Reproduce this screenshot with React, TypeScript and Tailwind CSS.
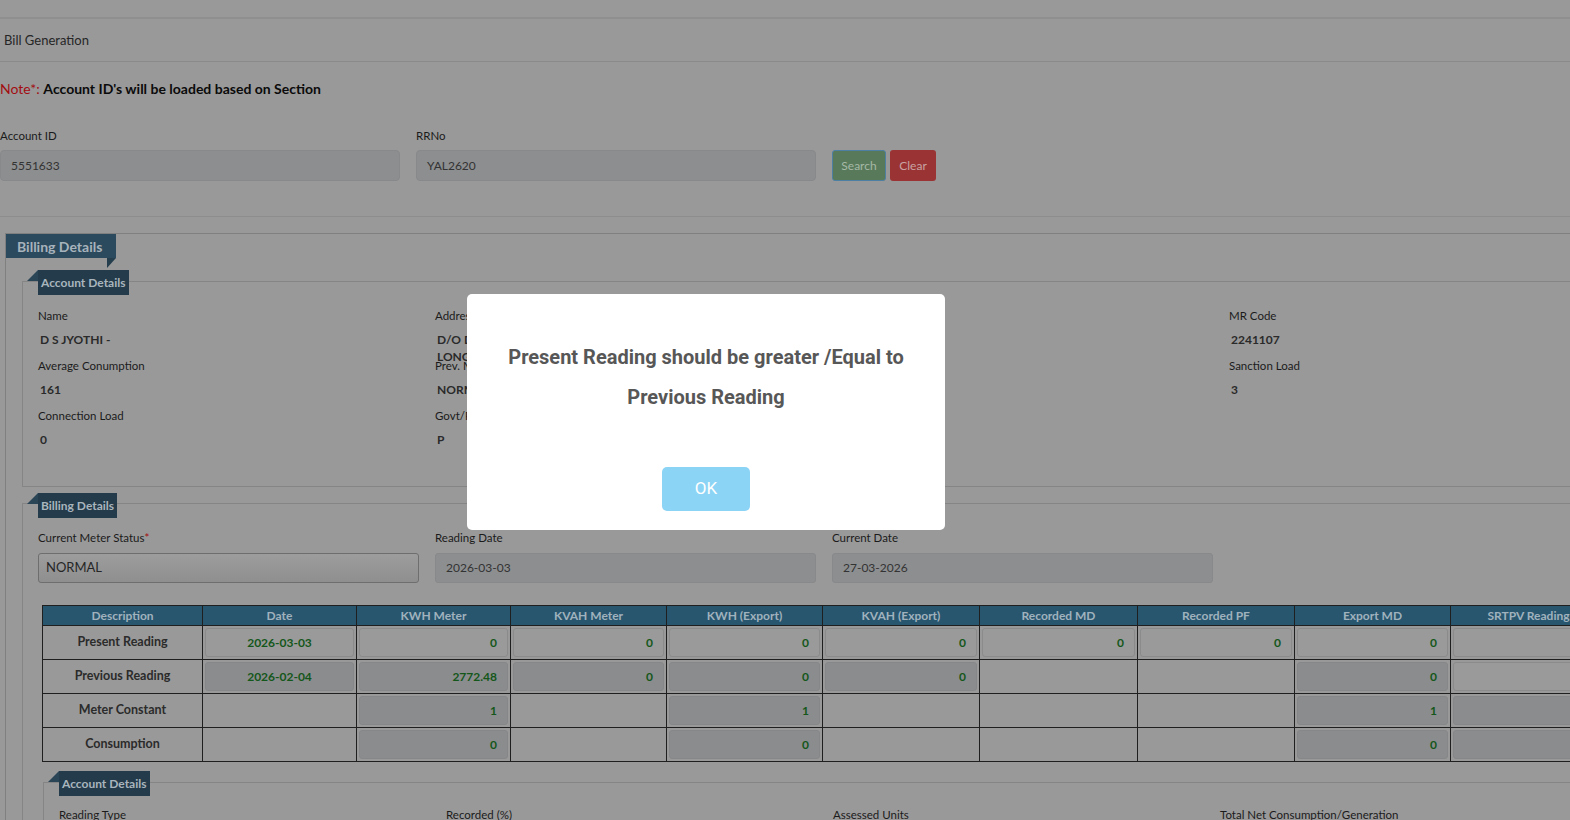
import React from 'react';

type Kind = 'w' | 'r' | 'n';
interface Cell {
  k: Kind;
  v?: string;
  center?: boolean;
}

const columns = [
  { title: 'Description', w: 160 },
  { title: 'Date', w: 154 },
  { title: 'KWH Meter', w: 154 },
  { title: 'KVAH Meter', w: 156 },
  { title: 'KWH (Export)', w: 156 },
  { title: 'KVAH (Export)', w: 157 },
  { title: 'Recorded MD', w: 158 },
  { title: 'Recorded PF', w: 157 },
  { title: 'Export MD', w: 156 },
  { title: 'SRTPV Reading', w: 156 },
];

const rows: { label: string; cells: Cell[] }[] = [
  {
    label: 'Present Reading',
    cells: [
      { k: 'w', v: '2026-03-03', center: true },
      { k: 'w', v: '0' },
      { k: 'w', v: '0' },
      { k: 'w', v: '0' },
      { k: 'w', v: '0' },
      { k: 'w', v: '0' },
      { k: 'w', v: '0' },
      { k: 'w', v: '0' },
      { k: 'w' },
    ],
  },
  {
    label: 'Previous Reading',
    cells: [
      { k: 'r', v: '2026-02-04', center: true },
      { k: 'r', v: '2772.48' },
      { k: 'r', v: '0' },
      { k: 'r', v: '0' },
      { k: 'r', v: '0' },
      { k: 'n' },
      { k: 'n' },
      { k: 'r', v: '0' },
      { k: 'w' },
    ],
  },
  {
    label: 'Meter Constant',
    cells: [
      { k: 'n' },
      { k: 'r', v: '1' },
      { k: 'n' },
      { k: 'r', v: '1' },
      { k: 'n' },
      { k: 'n' },
      { k: 'n' },
      { k: 'r', v: '1' },
      { k: 'r' },
    ],
  },
  {
    label: 'Consumption',
    cells: [
      { k: 'n' },
      { k: 'r', v: '0' },
      { k: 'n' },
      { k: 'r', v: '0' },
      { k: 'n' },
      { k: 'n' },
      { k: 'n' },
      { k: 'r', v: '0' },
      { k: 'r' },
    ],
  },
];

const accountFields: { label: string; value: React.ReactNode }[] = [
  { label: 'Name', value: 'D S JYOTHI -' },
  {
    label: 'Address',
    value: (
      <>
        D/O DODDAIAH NO 12 3RD CROSS
        <br />
        LONGFORD ROAD
      </>
    ),
  },
  { label: 'Tariff', value: 'LT-2A' },
  { label: 'MR Code', value: '2241107' },
  { label: 'Average Conumption', value: '161' },
  { label: 'Prev. Meter Status', value: 'NORMAL' },
  { label: 'Phase', value: '1' },
  { label: 'Sanction Load', value: '3' },
  { label: 'Connection Load', value: '0' },
  { label: 'Govt/Private', value: 'P' },
  { label: 'Zone', value: 'U' },
  { label: '', value: '' },
];

function Tag({ label }: { label: string }) {
  return (
    <div className="relative flex h-[25px] w-fit items-center bg-[#233b4b] px-[3px] text-[12px] font-bold text-[#a9b5bd]">
      <span className="absolute -left-[11px] top-0 h-[11px] w-[11px] bg-[#2a4556] [clip-path:polygon(100%_0,100%_100%,0_100%)]" />
      {label}
    </div>
  );
}

function TableCell({ cell }: { cell: Cell }) {
  if (cell.k === 'n') return <td className="border border-[#1f1f1f] p-0" />;
  const box =
    cell.k === 'w'
      ? 'bg-[#9a9a9b] border-[#8b8b8c]'
      : 'bg-[#8b8c8e] border-[#868789]';
  return (
    <td className="border border-[#1f1f1f] p-[2px]">
      <div
        className={`flex h-[29px] items-center rounded-[3px] border px-[10px] text-[12px] font-bold text-[#14571a] ${box} ${
          cell.center ? 'justify-center' : 'justify-end'
        }`}
      >
        {cell.v}
      </div>
    </td>
  );
}

export default function App() {
  return (
    <div className="relative h-[820px] w-[1570px] overflow-hidden bg-[#999999] font-['Lato','Noto_Sans',sans-serif] text-[#1b1b1b]">
      <div className="w-[1700px]">
        <div className="h-[17px]" />
        <div className="h-[2px] bg-[#8f8f8f]" />
        <div className="flex h-[43px] items-center border-b border-[#8a8a8a] px-[4px] pt-[2px] text-[13px] text-[#262626]">
          Bill Generation
        </div>

        <p className="mt-[17px] text-[14px] leading-[20px]">
          <span className="text-[#a30d12]">Note*: </span>
          <span className="font-bold text-[#0b0b0b]">Account ID's will be loaded based on Section</span>
        </p>

        <div className="mt-[29px] flex items-end gap-[16px]">
          <div className="w-[400px]">
            <div className="text-[11.5px] leading-[16px]">Account ID</div>
            <div className="mt-[6px] flex h-[31px] items-center rounded-[4px] border border-[#87898b] bg-[#8c8e90] px-[10px] text-[12px] text-[#333]">
              5551633
            </div>
          </div>
          <div className="w-[400px]">
            <div className="text-[11.5px] leading-[16px]">RRNo</div>
            <div className="mt-[6px] flex h-[31px] items-center rounded-[4px] border border-[#87898b] bg-[#8c8e90] px-[10px] text-[12px] text-[#333]">
              YAL2620
            </div>
          </div>
          <div className="flex gap-[4px]">
            <button className="h-[31px] w-[54px] rounded-[3px] border border-[#4d7fa3] bg-[#587a5a] text-[12px] text-[#a6b8a6]">
              Search
            </button>
            <button className="h-[31px] w-[46px] rounded-[3px] bg-[#9a3434] text-[12px] text-[#c8a2a2]">
              Clear
            </button>
          </div>
        </div>

        <div className="mt-[35px] h-px bg-[#8d8d8d]" />

        {/* outer billing details fieldset */}
        <div className="ml-[5px] mt-[16px] border-l border-t border-[#808080]">
          <div className="relative flex h-[24px] w-[110px] items-center bg-[#2c4a5d] pl-[11px] text-[14px] font-bold text-[#a7b3bc]">
            Billing Details
            <span className="absolute left-[101px] top-full h-[10px] w-[9px] bg-[#243e4e] [clip-path:polygon(0_0,100%_0,0_100%)]" />
          </div>

          {/* account details */}
          <div className="ml-[16px] mt-[23px] border-b border-l border-t border-[#858585] pb-[38px] pl-[15px]">
            <div className="-mt-[12px]">
              <Tag label="Account Details" />
            </div>
            <div className="mt-[13px] grid w-[1572px] grid-cols-[381px_381px_381px_381px] gap-x-[16px] gap-y-[10px]">
              {accountFields.map((f, i) => (
                <div key={i} className="h-[40px]">
                  <div className="text-[11.5px] leading-[16px]">{f.label}</div>
                  <div className="mt-[7px] h-[16px] pl-[2px] text-[12px] font-bold leading-[17px] text-[#2a2a2a]">
                    {f.value}
                  </div>
                </div>
              ))}
            </div>
          </div>

          {/* billing details */}
          <div className="ml-[16px] mt-[16px] border-l border-t border-[#858585] pl-[15px]">
            <div className="-mt-[11px]">
              <Tag label="Billing Details" />
            </div>
            <div className="mt-[12px] grid w-[1572px] grid-cols-[381px_381px_381px_381px] gap-x-[16px]">
              <div>
                <div className="text-[11.5px] leading-[16px]">
                  Current Meter Status<span className="text-[#a30d12]">*</span>
                </div>
                <div className="mt-[7px] flex h-[30px] items-center rounded-[3px] border border-[#6e6e6e] bg-gradient-to-b from-[#9d9d9d] to-[#8f8f8f] px-[7px] text-[13px] text-[#262626]">
                  NORMAL
                </div>
              </div>
              <div>
                <div className="text-[11.5px] leading-[16px]">Reading Date</div>
                <div className="mt-[7px] flex h-[30px] items-center rounded-[3px] border border-[#87898b] bg-[#8c8e90] px-[10px] text-[12px] text-[#333]">
                  2026-03-03
                </div>
              </div>
              <div>
                <div className="text-[11.5px] leading-[16px]">Current Date</div>
                <div className="mt-[7px] flex h-[30px] items-center rounded-[3px] border border-[#87898b] bg-[#8c8e90] px-[10px] text-[12px] text-[#333]">
                  27-03-2026
                </div>
              </div>
            </div>

            <table className="ml-[4px] mt-[22px] table-fixed border-collapse border border-[#1f1f1f]">
              <colgroup>
                {columns.map((c) => (
                  <col key={c.title} style={{ width: c.w }} />
                ))}
              </colgroup>
              <thead>
                <tr className="h-[20px] bg-[#28566f]">
                  {columns.map((c) => (
                    <th key={c.title} className="border border-[#1f1f1f] p-0 text-[12px] font-bold text-[#a0b2bd]">
                      {c.title}
                    </th>
                  ))}
                </tr>
              </thead>
              <tbody>
                {rows.map((r) => (
                  <tr key={r.label} className="h-[33.75px]">
                    <td className="border border-[#1f1f1f] p-0 text-center text-[12.5px] font-bold text-[#2b2b2b]">
                      {r.label}
                    </td>
                    {r.cells.map((c, i) => (
                      <TableCell key={i} cell={c} />
                    ))}
                  </tr>
                ))}
              </tbody>
            </table>

            {/* assessed details */}
            <div className="ml-[5px] mt-[20px] border-l border-t border-[#858585] pl-[15px]">
              <div className="-mt-[12px]">
                <Tag label="Account Details" />
              </div>
              <div className="mt-[11px] grid grid-cols-[371px_371px_371px_371px] gap-x-[16px] text-[11.5px] leading-[16px]">
                <div>Reading Type</div>
                <div>Recorded (%)</div>
                <div>Assessed Units</div>
                <div>Total Net Consumption/Generation</div>
              </div>
            </div>
          </div>
        </div>
      </div>

      {/* alert dialog */}
      <div className="absolute left-[467px] top-[294px] flex h-[236px] w-[478px] flex-col items-center rounded-[5px] bg-white pt-[43px]">
        <p className="text-center font-['Roboto',sans-serif] text-[20px] font-bold leading-[40px] text-[#575757]">
          Present Reading should be greater /Equal to
          <br />
          Previous Reading
        </p>
        <button className="mt-[50px] h-[44px] w-[88px] rounded-[5px] bg-[#8cd4f5] font-['Roboto',sans-serif] text-[17px] text-white">
          OK
        </button>
      </div>
    </div>
  );
}
